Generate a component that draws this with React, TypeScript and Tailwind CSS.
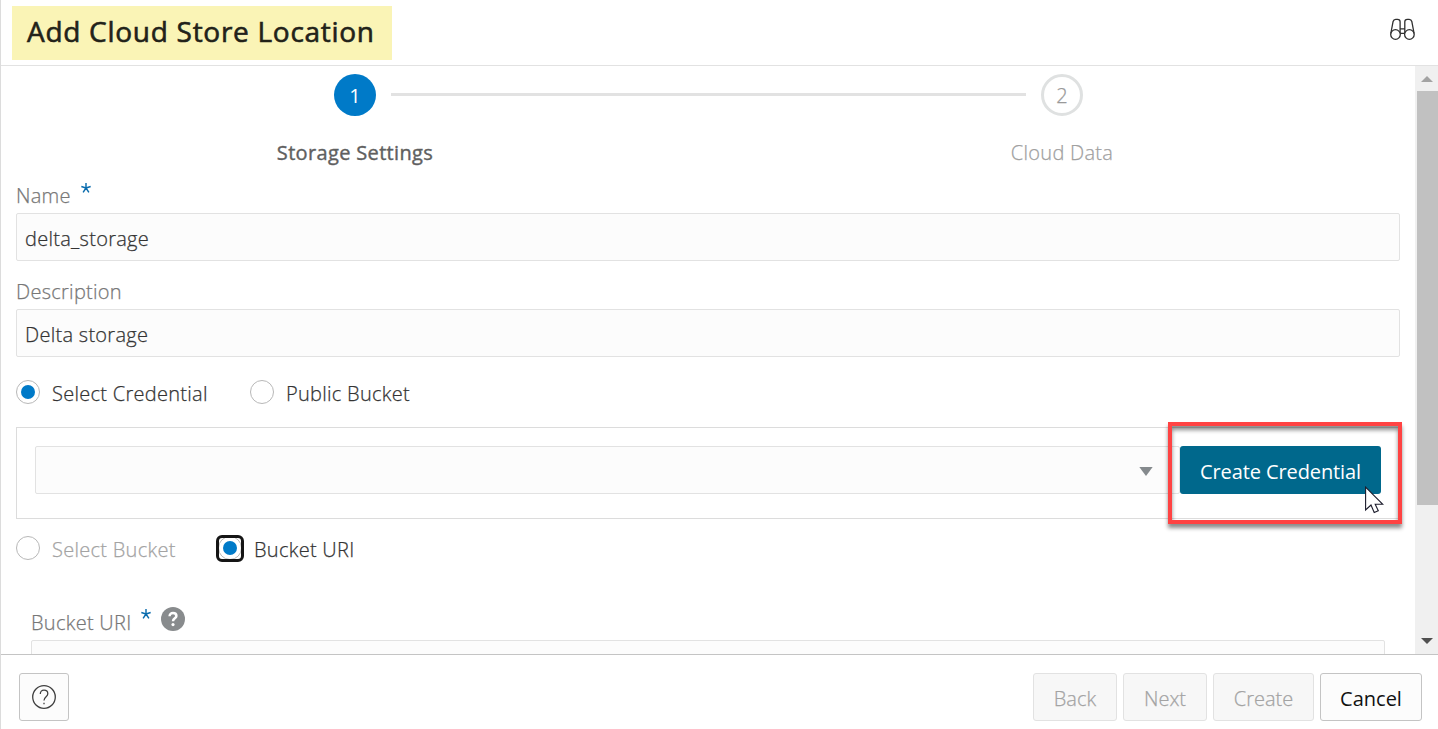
import type { ReactNode } from "react";

function Radio({ checked, focused }: { checked?: boolean; focused?: boolean }) {
  const dot = (
    <span className="flex size-6 shrink-0 items-center justify-center rounded-full border border-[#b8b8b8] bg-white">
      {checked && <span className="size-[14px] rounded-full bg-[#007ac8]" />}
    </span>
  );
  if (!focused) return dot;
  return (
    <span className="-ml-px flex h-[27px] w-[28px] shrink-0 items-center justify-center overflow-hidden rounded-[6px] border-3 border-[#151515] bg-white">
      {dot}
    </span>
  );
}

function Required() {
  return (
    <svg className="size-[10px] shrink-0" viewBox="0 0 9 9" fill="none" stroke="#0a6cae" strokeWidth="1.3">
      <path d="M4.5 4.5V0M4.5 4.5L.3 3.2M4.5 4.5L8.7 3.2M4.5 4.5L1.9 8.4M4.5 4.5L7.1 8.4" />
    </svg>
  );
}

function Field({ children }: { children: ReactNode }) {
  return (
    <div className="flex h-12 items-center rounded-[2px] border border-[#e2e2e2] bg-[#fcfcfc] pt-[3px] pl-2 text-[#333]">
      {children}
    </div>
  );
}

function Cursor() {
  return (
    <svg className="absolute top-[40px] left-[185px] h-[28px] w-[19px]" viewBox="0 0 19 28">
      <path
        d="M.6 1.2V24L6 19L9.2 26.5L13.3 24.8L10.2 18.3H17.8Z"
        fill="#fff"
        stroke="#1b1b2b"
        strokeWidth="1.1"
      />
    </svg>
  );
}

export default function App() {
  return (
    <div className="flex h-[729px] w-[1438px] flex-col overflow-hidden border-l border-[#dcdcdc] bg-white font-['Open_Sans','Noto_Sans',sans-serif] text-[20px] leading-7 font-light tracking-[0.28px] whitespace-nowrap [-webkit-text-stroke-width:0.25px]">
      <header className="flex h-[66px] shrink-0 items-start justify-between border-b border-[#e2e2e2] pt-1.5 pr-[22px] pl-[11px]">
        <h1 className="flex h-[54px] w-[380px] items-center bg-[#faf4b6] pb-[4px] pl-[15px] text-[28px] font-normal tracking-[0.72px] text-[#222219] [-webkit-text-stroke-width:0.6px]">
          Add Cloud Store Location
        </h1>
        <svg className="mt-[12px] h-[24px] w-[27px]" viewBox="0 0 27 24" fill="none" stroke="#2f2f2f" strokeWidth="1.3">
          <circle cx="6.5" cy="16.5" r="4.8" />
          <circle cx="20.4" cy="16.5" r="4.8" />
          <path d="M1.8 15.5L4.1 3.5C4.5 1.9 5.3 1.4 6.7 1.4H8.6C10.3 1.4 11.1 2.3 11.1 3.8V15M25.1 15.5L22.8 3.5C22.4 1.9 21.6 1.4 20.2 1.4H18.3C16.6 1.4 15.8 2.3 15.8 3.8V15M11.1 10.8H15.8M11.1 15.4H15.8" />
        </svg>
      </header>

      <div className="flex h-[588px] shrink-0 overflow-hidden">
        <main className="w-[1414px] shrink-0 overflow-hidden pr-[15px] pl-[15px]">
          <div className="flex h-[114px] pt-2 pl-[237px]">
            <div className="flex w-[204px] shrink-0 flex-col items-center">
              <span className="flex size-[42px] items-center justify-center rounded-full bg-[#007ac8] pt-[2px] font-normal text-white [-webkit-text-stroke-width:0px]">1</span>
              <span className="mt-[23px] font-normal tracking-[0.34px] text-[#5f5f5f] [-webkit-text-stroke-width:0.4px]">Storage Settings</span>
            </div>
            <div className="-mx-[66px] mt-[19px] h-[3px] w-[635px] shrink-0 bg-[#e2e2e2]" />
            <div className="flex w-[204px] shrink-0 flex-col items-center">
              <span className="flex size-[42px] items-center justify-center rounded-full border-[3px] border-[#dfe1e1] pt-[2px] text-[#999]">2</span>
              <span className="mt-[23px] text-[#a0a0a0]">Cloud Data</span>
            </div>
          </div>

          <div className="flex h-[33px] items-start text-[#777]">
            <span className="mt-[2px] w-[65px]">Name</span>
            <span className="mt-[3px] flex"><Required /></span>
          </div>
          <Field><span>delta_storage</span></Field>

          <div className="mt-[17px] h-[31px] text-[#777]"><span>Description</span></div>
          <Field><span>Delta storage</span></Field>

          <div className="mt-[21px] flex h-[28px] items-center text-[#333]">
            <Radio checked />
            <span className="mt-[3px] ml-[12px] w-[198px]">Select Credential</span>
            <Radio />
            <span className="mt-[3px] ml-[12px]">Public Bucket</span>
          </div>

          <section className="mt-[21px] flex h-[92px] border border-[#dcdcdc] pt-[18px] pl-[18px]">
            <div className="flex h-12 w-[1145px] shrink-0 items-center justify-end rounded-[2px] border border-[#e2e2e2] bg-[#fcfcfc] pt-[2px] pr-[26px]">
              <svg className="h-[9px] w-[14px]" viewBox="0 0 14 9" fill="#858a8d"><path d="M.3 0H13.7L7 9Z" /></svg>
            </div>
            <div className="relative">
              <button className="flex h-12 w-[201px] items-center justify-center rounded-[3px] bg-[#00688c] pt-[3px] font-normal tracking-[-0.1px] text-white [-webkit-text-stroke-width:0px]">
                <span>Create Credential</span>
              </button>
              <div className="absolute -top-[24px] -left-[12px] h-[102px] w-[234px] border-4 border-[#ff4343] shadow-[0_4px_4px_rgba(0,0,0,.45),inset_0_4px_4px_rgba(0,0,0,.45)]" />
              <Cursor />
            </div>
          </section>

          <div className="mt-[15px] flex h-[28px] items-center text-[#333]">
            <Radio />
            <span className="mt-[3px] ml-[12px] w-[165px] text-[#a3a3a3]">Select Bucket</span>
            <Radio checked focused />
            <span className="mt-[3px] ml-[10px]">Bucket URI</span>
          </div>

          <div className="mt-[44px] px-[15px]">
            <div className="flex h-[34px] items-start text-[#777]">
              <span className="mt-[3px] w-[110px]">Bucket URI</span>
              <span className="mt-[3px] flex"><Required /></span>
              <svg className="mt-[1px] ml-[10px] size-6" viewBox="0 0 24 24">
                <circle cx="12" cy="12" r="12" fill="#888b8d" />
                <path d="M8.6 9.2C8.6 7.2 10 6.1 12 6.1S15.4 7.2 15.4 9C15.4 11.3 12 11.4 12 14.2" fill="none" stroke="#fff" strokeWidth="2.5" />
                <circle cx="12" cy="17.6" r="1.6" fill="#fff" />
              </svg>
            </div>
            <Field>{null}</Field>
          </div>
        </main>

        <aside className="flex w-[23px] shrink-0 flex-col bg-[#f0f0f0] pl-[2px]">
          <div className="flex h-[25px] shrink-0 items-end justify-center pr-[1px] pb-[9px]">
            <svg className="h-[6px] w-[12px]" viewBox="0 0 12 6" fill="#a3a3a3"><path d="M0 6L6 0L12 6Z" /></svg>
          </div>
          <div className="h-[414px] shrink-0 bg-[#c1c1c1]" />
          <div className="flex flex-1 items-end justify-center pr-[1px] pb-[10px]">
            <svg className="h-[6px] w-[12px]" viewBox="0 0 12 6" fill="#505050"><path d="M0 0H12L6 6Z" /></svg>
          </div>
        </aside>
      </div>

      <footer className="flex h-[75px] shrink-0 items-start justify-between border-t border-[#c4c4c4] pt-[18px] pr-4 pl-[18px]">
        <button className="flex h-12 w-[50px] items-center justify-center rounded-[3px] border border-[#c4c4c4] bg-[#fcfcfc]">
          <svg className="-mt-px size-6" viewBox="0 0 24 24" fill="none" stroke="#404040" strokeWidth="1.3">
            <circle cx="12" cy="12" r="11.3" />
            <path d="M8.3 9C8.3 6.5 9.8 5.2 12 5.2S15.8 6.5 15.8 8.7C15.8 11.8 12 11.6 12 15.5M12 17.7V19.2" />
          </svg>
        </button>
        <div className="flex gap-1.5 tracking-[0px] text-[#a3a3a3]">
          <button className="h-12 w-[84px] rounded-[3px] border border-[#e2e2e2] bg-[#f7f7f7] pt-[3px]"><span>Back</span></button>
          <button className="h-12 w-[84px] rounded-[3px] border border-[#e2e2e2] bg-[#f7f7f7] pt-[3px]"><span>Next</span></button>
          <button className="h-12 w-[101px] rounded-[3px] border border-[#e2e2e2] bg-[#f7f7f7] pt-[3px]"><span>Create</span></button>
          <button className="h-12 w-[102px] rounded-[3px] border border-[#c4c4c4] bg-[#fcfcfc] pt-[3px] font-normal text-[#111] [-webkit-text-stroke-width:0px]"><span>Cancel</span></button>
        </div>
      </footer>
    </div>
  );
}
